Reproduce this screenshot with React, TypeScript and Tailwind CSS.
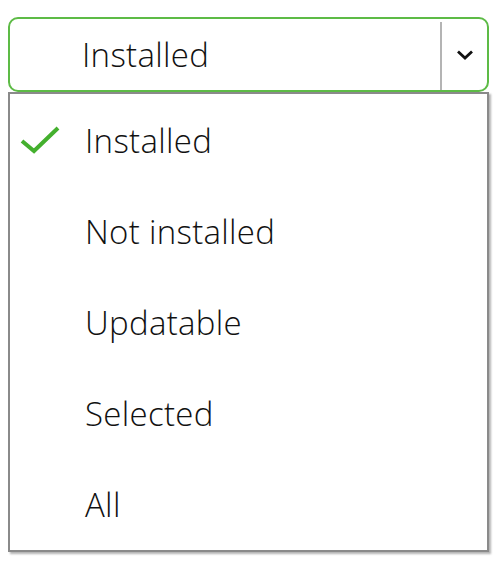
import React from "react";

const items = ["Installed", "Not installed", "Updatable", "Selected", "All"];

export default function App() {
  return (
    <div
      className="w-[504px] h-[570px] bg-white pt-[17px] pl-[8px]"
      style={{ fontFamily: '"Open Sans", "Noto Sans", sans-serif' }}
    >
      <div className="w-[481px]">
        <div className="h-[75px] border-2 border-[#5dbb46] rounded-[10px] flex">
          <div className="flex-1 flex items-center pl-[72px] text-[33px] font-[350] text-[#111] leading-none tracking-[0.3px]">
            Installed
          </div>
          <div className="w-[2px] mt-[3px] bg-[#b4b4b4]" />
          <div className="w-[45px] flex items-center justify-center">
            <svg width="18" height="12" viewBox="0 0 18 12">
              <path d="M2 2.5 L9 9 L16 2.5" fill="none" stroke="#111" strokeWidth="2.8" />
            </svg>
          </div>
        </div>
        <div className="border-2 border-[#8a8a8a] bg-white shadow-[2px_2px_2px_rgba(0,0,0,0.3)] pt-[1px]">
          {items.map((it, i) => (
            <div key={it} className="h-[91px] flex items-center">
              <div className="w-[75px] flex items-center pl-[10px]">
                {i === 0 && (
                  <svg width="40" height="32" viewBox="0 0 40 32">
                    <path d="M2 16 L14 26 L38 3" fill="none" stroke="#44b02e" strokeWidth="4" />
                  </svg>
                )}
              </div>
              <span className="text-[33px] font-[350] text-[#111] leading-none tracking-[0.3px]">{it}</span>
            </div>
          ))}
        </div>
      </div>
    </div>
  );
}
